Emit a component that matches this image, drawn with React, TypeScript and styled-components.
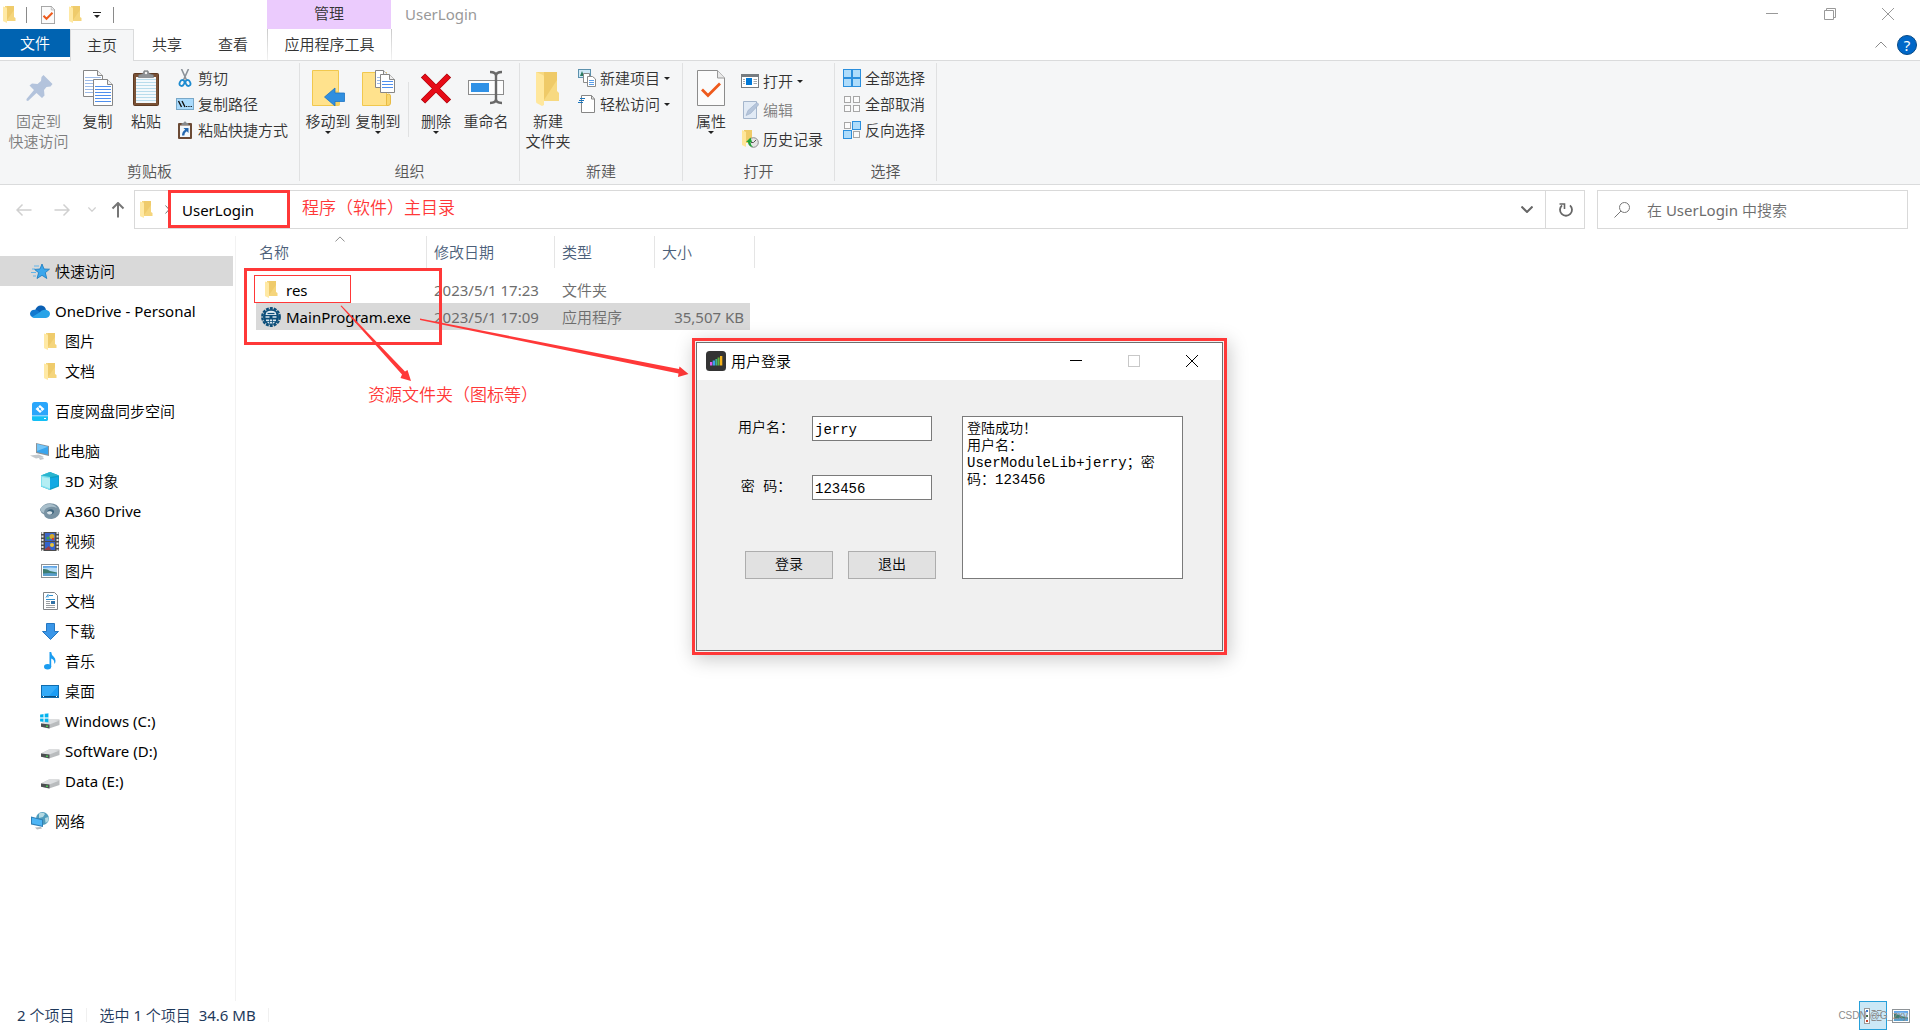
import React from "react";
import styled, { createGlobalStyle } from "styled-components";

const UI_FONT = '"Noto Sans", "Noto Sans CJK SC DemiLight", "Noto Sans CJK SC", sans-serif';
const FORM_FONT = '"Liberation Mono", "Noto Sans CJK SC DemiLight", "Noto Sans CJK SC", monospace';
const RED = "#ff3838";

const GlobalStyle = createGlobalStyle`
  *, *::before, *::after { box-sizing: border-box; }
  body { margin: 0; background: #fff; }
  button, input, textarea { font: inherit; color: inherit; margin: 0; border-radius: 0; }
  button { padding: 0; border: 0; background: none; }
  svg { display: block; flex: none; }
`;

/* ---------- shell ---------- */
const Explorer = styled.div`
  position: relative;
  display: flex;
  flex-direction: column;
  min-height: 100vh;
  overflow: hidden;
  background: #fff;
  font-family: ${UI_FONT};
  font-size: 15px;
  line-height: 20px;
  color: #000;
`;
const TitleBar = styled.header`
  display: flex;
  height: 29px;
`;
const QuickAccess = styled.div`
  display: flex;
  align-items: center;
  gap: 11px;
  width: 267px;
  padding-left: 3px;
`;
const QuickButton = styled.button<{ $w: number }>`
  display: flex;
  align-items: center;
  justify-content: center;
  width: ${(p) => p.$w}px;
  height: 29px;
  color: #8a8a8a;
`;
const QuickRule = styled.span`
  width: 1px;
  height: 16px;
  background: #8a8a8a;
`;
const ContextTitle = styled.div`
  width: 124px;
  background: #ebcbfd;
  color: #333;
  text-align: center;
  line-height: 26px;
`;
const WindowTitle = styled.h1`
  flex: 1;
  margin: 0;
  padding-left: 14px;
  font-size: 15px;
  font-weight: 400;
  line-height: 28px;
  color: #999;
`;
const WindowControls = styled.div<{ $color: string; $end: number }>`
  display: flex;
  padding: 0 ${(p) => p.$end}px 1px 0;
  color: ${(p) => p.$color};
`;
const WindowButton = styled.button`
  display: flex;
  align-items: center;
  justify-content: center;
  width: 58px;
`;

/* ---------- tabs ---------- */
const TabRow = styled.nav`
  display: flex;
  height: 31px;
  color: #333;
`;
const FileTab = styled.button`
  width: 70px;
  height: 28px;
  background: #0063b1;
  color: #fff;
`;
const Tab = styled.button<{ $active?: boolean }>`
  position: relative;
  height: ${(p) => (p.$active ? 32 : 31)}px;
  padding: 0 ${(p) => (p.$active ? 16 : 18)}px 2px;
  border: solid #dadbdc;
  border-width: ${(p) => (p.$active ? "1px 1px 0" : "0")};
  background: ${(p) => (p.$active ? "#f5f6f7" : "transparent")};
`;
const ContextTab = styled.button`
  width: 125px;
  margin-left: 1px;
  padding-bottom: 2px;
  border: solid;
  border-width: 0 1px;
  border-image: linear-gradient(#c8c8c8, #f4f4f4) 1;
`;
const TabTools = styled.div`
  display: flex;
  flex: 1;
  align-items: center;
  justify-content: flex-end;
  gap: 9px;
  padding-right: 3px;
`;
const HelpButton = styled.button`
  width: 20px;
  height: 20px;
  border: 1px solid #084a86;
  border-radius: 50%;
  background: #0067c8;
  color: #fff;
  line-height: 18px;
`;

/* ---------- ribbon ---------- */
const Ribbon = styled.section`
  display: flex;
  padding: 2px 0 3px;
  border: solid #dadbdc;
  border-width: 1px 0;
  background: #f5f6f7;
  color: #333;
`;
const Group = styled.div`
  display: flex;
  flex-direction: column;
  border-right: 1px solid #e0e1e2;
`;
const GroupBody = styled.div<{ $end?: number }>`
  display: flex;
  align-items: flex-start;
  height: 98px;
  padding: 2px ${(p) => p.$end ?? 11}px 0 3px;
`;
const GroupLabel = styled.div`
  text-align: center;
  color: #555;
`;
const BigButton = styled.button<{ $w?: number }>`
  display: flex;
  flex-direction: column;
  align-items: center;
  width: ${(p) => p.$w ?? 50}px;
  padding-top: 5px;
  white-space: pre;
  &:disabled { color: #7d7d7d; }
  > svg:first-child { margin-bottom: 5px; }
`;
const ButtonRule = styled.span`
  width: 1px;
  height: 55px;
  margin: 17px 2px 0 5px;
  background: #e0e1e2;
`;
const SmallColumn = styled.div<{ $loose?: boolean }>`
  display: flex;
  flex-direction: column;
  gap: ${(p) => (p.$loose ? 3 : 0)}px;
  padding: ${(p) => (p.$loose ? 3 : 0)}px 0 0 5px;
`;
const SmallButton = styled.button`
  display: flex;
  align-items: center;
  gap: 4px;
  height: 26px;
  white-space: nowrap;
  &:disabled { color: #7d7d7d; }
`;

/* ---------- address row ---------- */
const AddressRow = styled.div`
  display: flex;
  padding: 5px 12px 7px 5px;
`;
const NavButton = styled.button<{ $w: number }>`
  display: flex;
  align-items: center;
  justify-content: center;
  width: ${(p) => p.$w}px;
  color: #d0d0d0;
  &:enabled { color: #767676; }
`;
const AddressBar = styled.div`
  display: flex;
  flex: 1;
  align-items: center;
  height: 39px;
  margin: 0 12px 0 1px;
  padding-left: 5px;
  border: 1px solid #d9d9d9;
`;
const Crumb = styled.button`
  flex: 1;
  text-align: left;
`;
const BarButton = styled.button<{ $ruled?: boolean }>`
  display: flex;
  align-items: center;
  justify-content: center;
  width: 39px;
  height: 37px;
  padding-left: 2px;
  border-left: ${(p) => (p.$ruled ? "1px solid #d9d9d9" : "0")};
  color: #666;
`;
const SearchBox = styled.label`
  display: flex;
  align-items: center;
  gap: 17px;
  width: 311px;
  padding: 0 16px;
  border: 1px solid #d9d9d9;
  color: #777;
`;
const SearchInput = styled.input`
  flex: 1;
  min-width: 0;
  padding: 0;
  border: 0;
  outline: 0;
  background: none;
  &::placeholder { color: #6d6d6d; opacity: 1; }
`;

/* ---------- main area ---------- */
const Main = styled.div`
  display: flex;
  flex: 1;
`;
const Sidebar = styled.nav`
  width: 236px;
  padding: 20px 2px 0 0;
  border-right: 1px solid #f2f2f2;
`;
const TreeList = styled.ul`
  margin: 0 0 10px;
  padding: 0;
  list-style: none;
`;
const TreeItem = styled.a<{ $level: number; $selected?: boolean }>`
  display: flex;
  align-items: center;
  gap: 5px;
  height: 30px;
  padding-left: ${(p) => 20 + p.$level * 10}px;
  background: ${(p) => (p.$selected ? "#d9d9d9" : "transparent")};
  color: #000;
  text-decoration: none;
  white-space: nowrap;
`;
const IconBox = styled.span`
  display: flex;
  justify-content: center;
  width: 20px;
`;
const FilePane = styled.main`
  flex: 1;
  padding-left: 20px;
`;
const FileTable = styled.table`
  width: 499px;
  table-layout: fixed;
  border-collapse: separate;
  border-spacing: 0;
`;
const HeadCell = styled.th<{ $w: number; $first?: boolean }>`
  position: relative;
  width: ${(p) => p.$w}px;
  height: 32px;
  padding: 0 0 0 ${(p) => (p.$first ? 3 : 7)}px;
  border-right: 1px solid #e5e5e5;
  color: #4c607a;
  font-weight: 400;
  text-align: left;
`;
const SortMark = styled.span`
  position: absolute;
  top: 0;
  left: 79px;
  color: #777;
`;
const Spacer = styled.tbody`
  td { height: 8px; padding: 0; }
`;
const FileRow = styled.tr<{ $selected?: boolean }>`
  td {
    height: 27px;
    padding: 0 0 0 7px;
    background: ${(p) => (p.$selected ? "#d9d9d9" : "transparent")};
    background-clip: padding-box;
    color: #6d6d6d;
    white-space: nowrap;
  }
  td:first-child { padding-left: 5px; color: #000; }
  td:last-child { padding: 0 6px 0 0; border-right: 5px solid transparent; text-align: right; }
`;
const FileName = styled.span`
  display: flex;
  align-items: center;
  gap: 5px;
`;

/* ---------- status bar ---------- */
const StatusBar = styled.footer`
  display: flex;
  align-items: center;
  height: 29px;
  padding: 0 5px 0 17px;
  color: #1e395b;
`;
const StatusText = styled.span`
  margin: 0 12px 2px 0;
  padding-right: 12px;
  border-right: 1px solid #f0f0f0;
  line-height: 14px;
  white-space: pre;
`;
const ViewButton = styled.button<{ $on?: boolean; $push?: boolean }>`
  display: flex;
  align-items: center;
  justify-content: center;
  width: 28px;
  height: 29px;
  margin-left: ${(p) => (p.$push ? "auto" : "0")};
  border: ${(p) => (p.$on ? "1px solid #26a0da" : "0")};
  background: ${(p) => (p.$on ? "#cbe8f6" : "transparent")};
`;
const Watermark = styled.span`
  position: absolute;
  right: 12px;
  bottom: 4px;
  color: #8c8c8c;
  font: 10px/20px "Liberation Sans", sans-serif;
`;

/* ---------- login dialog ---------- */
const DialogFrame = styled.div`
  position: absolute;
  top: 338px;
  left: 692px;
  width: 535px;
  padding: 1px;
  border: 3px solid ${RED};
  background: #f2f2f2;
  box-shadow: 2px 4px 18px rgba(0, 0, 0, 0.22);
`;
const Dialog = styled.section`
  border: 1px solid #6e6e6e;
  background: #f0f0f0;
`;
const DialogTitle = styled.header`
  display: flex;
  height: 37px;
  padding-left: 9px;
  background: #fff;
`;
const DialogName = styled.h2`
  display: flex;
  flex: 1;
  align-items: center;
  gap: 5px;
  margin: 0;
  padding-bottom: 2px;
  font-size: 15px;
  font-weight: 400;
`;
const LoginForm = styled.form`
  display: flex;
  gap: 26px;
  padding: 36px 39px 71px 41px;
  font-family: ${FORM_FONT};
  font-size: 14px;
`;
const Fields = styled.div`
  width: 198px;
`;
const Field = styled.label`
  display: flex;
  gap: 18px;
  height: 25px;
  margin-bottom: 34px;
  line-height: 24px;
  white-space: pre;
`;
const FieldName = styled.span`
  width: 56px;
  text-align: center;
`;
const FieldInput = styled.input`
  width: 120px;
  padding: 2px 2px 0;
  border: 1px solid #7a7a7a;
  background: #fff;
  outline: 0;
`;
const FormButtons = styled.div`
  display: flex;
  gap: 15px;
  padding: 17px 0 0 7px;
`;
const FormButton = styled.button`
  width: 88px;
  height: 28px;
  border: 1px solid #adadad;
  background: #e1e1e1;
`;
const Output = styled.textarea`
  flex: 1;
  min-width: 0;
  padding: 4px 16px 4px 4px;
  border: 1px solid #7a7a7a;
  background: #fff;
  line-height: 17px;
  resize: none;
  overflow: hidden;
  outline: 0;
`;

/* ---------- annotations drawn over the window ---------- */
const MarkBox = styled.div<{ $x: number; $y: number; $w: number; $h: number; $line: number }>`
  position: absolute;
  left: ${(p) => p.$x}px;
  top: ${(p) => p.$y}px;
  width: ${(p) => p.$w}px;
  height: ${(p) => p.$h}px;
  border: ${(p) => p.$line}px solid ${RED};
  pointer-events: none;
`;
const MarkText = styled.p<{ $x: number; $y: number }>`
  position: absolute;
  left: ${(p) => p.$x}px;
  top: ${(p) => p.$y}px;
  margin: 0;
  color: ${RED};
  font-size: 17px;
  line-height: 24px;
  white-space: nowrap;
`;
const MarkArrows = styled.svg`
  position: absolute;
  top: 0;
  left: 0;
  pointer-events: none;
`;

/* ---------- icons ---------- */
const Folder = () => (
  <svg width="13" height="17" viewBox="0 0 13 17">
    <path d="M2 0H11V11L12.500 12V15H2Z" fill="#f5d57c" />
    <path d="M4 0H11V4L4 14Z" fill="#efcb6b" />
    <path d="M0 0.400L3.200 1.600Q4 2 4 3V17L.8 15.600Q0 15.200 0 14.400Z" fill="#ffe9a4" />
  </svg>
);
const PageCheck = ({ w, h }: { w: number; h: number }) => (
  <svg width={w} height={h} viewBox="0 0 28 36">
    <path d="M.5.5H20.500L27.500 8V35.500H.5Z" fill="#fbfbfb" stroke="#8c8c8c" strokeWidth={w < 20 ? 2 : 1} />
    <path d="M20.500.5V8H27.500" fill="#e9e9e9" stroke="#9a9a9a" />
    <path d="M5 19.500L11 25.500L23 13.500" fill="none" stroke="#ee5a1c" strokeWidth={w < 20 ? 4 : 2.8} />
  </svg>
);
const Caret = () => (
  <svg width="6" height="3" viewBox="0 0 6 3"><path d="M0 0H6L3 3Z" fill="#222" /></svg>
);
const CustomizeIcon = () => (
  <svg width="8" height="6" viewBox="0 0 8 6"><path d="M0 0H8V1H0ZM1 3H7L4 6Z" fill="#222" /></svg>
);
const MinIcon = () => (
  <svg width="12" height="12" viewBox="0 0 12 12"><path d="M0 5.500H12" stroke="currentColor" /></svg>
);
const MaxIcon = () => (
  <svg width="12" height="12" viewBox="0 0 12 12"><rect x=".5" y=".5" width="11" height="11" fill="none" stroke="#c8c8c8" /></svg>
);
const RestoreIcon = () => (
  <svg width="12" height="12" viewBox="0 0 12 12"><path d="M.5 2.500H9.500V11.500H.5ZM2.500 2.500V.5H11.500V9.500H9.500" fill="none" stroke="currentColor" /></svg>
);
const CloseIcon = () => (
  <svg width="12" height="12" viewBox="0 0 12 12"><path d="M0 0L12 12M12 0L0 12" stroke="currentColor" /></svg>
);
const Chevron = ({ up, w = 12, s = 1 }: { up?: boolean; w?: number; s?: number }) => (
  <svg width={w} height={w / 2 + 1} viewBox="0 0 12 7">
    <path d={up ? "M.5 6.500L6 1L11.500 6.500" : "M.5.5L6 6L11.500.5"} fill="none" stroke="currentColor" strokeWidth={s} />
  </svg>
);

const PinIcon = () => (
  <svg width="36" height="36" viewBox="0 0 36 36">
    <path d="M22.500 5L31.500 14L29.500 16.500L25.500 17L23 20L23.500 25.500L21 28L15.500 23L7 31L5.500 30.500L5.500 29L13 20L8.500 15.500L11 13.500L16.500 14L20 11L20.500 7Z" fill="#b3c3dc" />
  </svg>
);
const Sheet = ({ x, y, w, h, c }: { x: number; y: number; w: number; h: number; c: string }) => (
  <g transform={`translate(${x} ${y})`}>
    <path d={`M.5.5H${w - 5.5}L${w - 0.5} 5.500V${h - 0.5}H.5Z`} fill="#fff" stroke="#868686" />
    <path d={`M${w - 5.5}.5V5.500H${w - 0.5}`} fill="#eee" stroke="#868686" />
    {Array.from({ length: Math.floor((h - 8) / 3) }, (_, i) => (
      <path key={i} d={`M2 ${7.5 + i * 3}H${w - 2}`} stroke={c} />
    ))}
  </g>
);
const CopyIcon = () => (
  <svg width="30" height="36" viewBox="0 0 30 36">
    <Sheet x={0} y={0} w={20} h={27} c="#9dbbe8" />
    <Sheet x={10} y={9} w={20} h={27} c="#4f8fee" />
  </svg>
);
const Clipboard = () => (
  <svg width="26" height="36" viewBox="0 0 26 36">
    <rect x=".5" y="3.500" width="25" height="32" rx="1" fill="#7a5236" stroke="#5d3a22" />
    <rect x="3" y="7" width="20" height="26" fill="#f4f9fc" />
    {[9, 12, 15, 18, 21, 24, 27, 30].map((y) => <path key={y} d={`M3 ${y}.5H23`} stroke="#b9dcec" />)}
    <path d="M5.500 7.500V5L10 3.500L11 .8H15L16 3.500L20.500 5V7.500Z" fill="#8f9396" stroke="#6d7174" strokeWidth=".6" />
    <circle cx="13" cy="3" r="1.200" fill="#f3f3f3" />
  </svg>
);
const Scissors = () => (
  <svg width="18" height="18" viewBox="0 0 18 18">
    <path d="M5.500 0L10.500 11M12.500 0L7.500 11" stroke="#8b9299" strokeWidth="1.600" />
    <ellipse cx="6" cy="14" rx="2.300" ry="3" fill="none" stroke="#1d8bd0" strokeWidth="1.800" transform="rotate(25 6 14)" />
    <ellipse cx="12" cy="14" rx="2.300" ry="3" fill="none" stroke="#1d8bd0" strokeWidth="1.800" transform="rotate(-25 12 14)" />
  </svg>
);
const PathIcon = () => (
  <svg width="18" height="18" viewBox="0 0 18 18">
    <rect x=".5" y="3.500" width="17" height="11" fill="#a9dafc" stroke="#79a8c8" />
    <path d="M2.500 6L5.500 12M6 6L9 12" stroke="#111" strokeWidth="1.400" />
    <path d="M10 11.500H11.300M12.300 11.500H13.600M14.600 11.500H15.900" stroke="#111" strokeWidth="1.200" />
  </svg>
);
const ShortcutIcon = () => (
  <svg width="18" height="18" viewBox="0 0 18 18">
    <rect x="2" y="2" width="14" height="16" rx="1" fill="#6b4a35" />
    <rect x="4" y="4.500" width="10" height="11.500" fill="#f2f7fb" />
    <path d="M5.500 4V2.500L8 1.500L9 0L10 1.500L12.500 2.500V4Z" fill="#85898c" />
    <path d="M7.500 7H12.500V12L10.800 10.300Q8.300 11.500 8.300 14.500H6Q6 10.500 9.200 8.700Z" fill="#2366ae" />
  </svg>
);
const MoveIcon = () => (
  <svg width="34" height="36" viewBox="0 0 34 36">
    <path d="M1.500.5H27.500V35.500H1.500Z" fill="#ffe28d" stroke="#f1c84e" />
    <path d="M24 21Q29 20 29 25V35.500H24Z" fill="#f5d165" />
    <path d="M13.500 27L24 18V23H33.500V31.500H24V36Z" fill="#2f8fe0" stroke="#1d74c4" strokeWidth=".8" />
  </svg>
);
const CopyToIcon = () => (
  <svg width="34" height="36" viewBox="0 0 34 36">
    <path d="M1.500 2.500H25.500V35.500H1.500Z" fill="#ffe28d" stroke="#f1c84e" />
    <path d="M25.500 35.500V26Q25.500 24 27.500 24T29.500 26V33Q29.500 35.500 27 35.500Z" fill="#f9d76f" stroke="#e8bb45" />
    <Sheet x={14} y={0} w={14} h={18} c="#9dbbe8" />
    <Sheet x={19} y={4} w={15} h={19} c="#4f8fee" />
  </svg>
);
const DeleteIcon = () => (
  <svg width="32" height="36" viewBox="0 0 32 36">
    <path d="M3 5.500L29 31.500M29 5.500L3 31.500" stroke="#a30008" strokeWidth="6" />
    <path d="M3.500 6L28.500 31M28.500 6L3.500 31" stroke="#e60b17" strokeWidth="4.600" />
  </svg>
);
const RenameIcon = () => (
  <svg width="36" height="36" viewBox="0 0 36 36">
    <rect x=".5" y="10.500" width="35" height="14" fill="#fdfdfd" stroke="#8c8c8c" />
    <rect x="3" y="13" width="18" height="9" fill="#2f91e6" />
    <path d="M22 2Q28 2 28 6V29Q28 33 22 33M34 2Q28 2 28 6M28 29Q28 33 34 33" fill="none" stroke="#686868" strokeWidth="2.400" />
  </svg>
);
const BigFolder = () => (
  <svg width="26" height="36" viewBox="0 0 26 36">
    <path d="M1 2H22V21L24 23V31H6Z" fill="#f7d981" />
    <path d="M9 2H22V10L9 30Z" fill="#efca68" />
    <path d="M1 2L8 5Q9 5.500 9 6.500V35L7 36L1.500 33Q1 32.500 1 31Z" fill="#ffe79c" />
  </svg>
);
const NewItemIcon = () => (
  <svg width="18" height="18" viewBox="0 0 18 18">
    <rect x=".5" y=".5" width="12" height="8" fill="#cfe9f7" stroke="#5c91ad" />
    <path d="M2 7L4 2L6 7Z" fill="#2b7a60" />
    <path d="M5.500 4.500H11.500V13.500H5.500Z" fill="#fff" stroke="#8b8b8b" />
    <path d="M9.500 7.500H14.500L17.500 10V17.500H9.500Z" fill="#fff" stroke="#8b8b8b" />
    <path d="M11 11.500H16M11 13.500H16M11 15.500H16" stroke="#5a9de8" />
  </svg>
);
const EasyIcon = () => (
  <svg width="18" height="18" viewBox="0 0 18 18">
    <path d="M3.500.5H13.500L16.500 4V17.500H3.500Z" fill="#fff" stroke="#868686" />
    <path d="M13.500.5V4H16.500" fill="none" stroke="#868686" />
    <path d="M2 3.500H7M1 5.500H6M0 7.500H5" stroke="#1c75bc" strokeWidth="1.200" />
  </svg>
);
const OpenIcon = () => (
  <svg width="18" height="18" viewBox="0 0 18 18">
    <rect x=".5" y="2.500" width="17" height="13" fill="#fff" stroke="#777c80" />
    <path d="M1 3H17V5H1Z" fill="#777c80" />
    <rect x="5" y="6" width="6" height="7" fill="#0078d7" />
    <path d="M2 7.500H4M2 9.500H4M2 11.500H4M12.500 7.500H16M12.500 9.500H16M12.500 11.500H16" stroke="#a4a9ad" />
  </svg>
);
const EditIcon = () => (
  <svg width="18" height="18" viewBox="0 0 18 18">
    <path d="M2.500.5H15.500V17.500H2.500Z" fill="#e1eaf5" stroke="#a5b6cc" />
    <path d="M5 14.500L7 9.500L16 1.500L18 3.500L9.500 12.500Z" fill="#b5c5db" stroke="#9badc6" strokeWidth=".6" />
  </svg>
);
const HistoryIcon = () => (
  <svg width="18" height="18" viewBox="0 0 18 18">
    <path d="M3 0H11V13H3Z" fill="#efcb68" />
    <path d="M1 0L5 2V17L1 15Z" fill="#ffe699" />
    <circle cx="12.500" cy="12.500" r="4.800" fill="#e4e4e4" stroke="#8c8c8c" />
    <path d="M12.500 12.500L15 10M12.500 12.500H10" stroke="#555" />
    <path d="M9.500 7.500L5 12H7Q7.500 16.500 12 17Q9.500 15 9.500 12H11Z" fill="#21a336" />
  </svg>
);
const Tiles = ({ on }: { on: boolean[] }) => (
  <svg width="18" height="18" viewBox="0 0 18 18">
    {[[0, 0], [9, 0], [0, 9], [9, 9]].map(([x, y], i) =>
      on[i] ? (
        <rect key={i} x={x + 0.5} y={y + 0.5} width="8" height="8" fill="#aedcfb" stroke="#2b8fdd" />
      ) : (
        <rect key={i} x={x + 1.5} y={y + 1.5} width="6" height="6" fill="#fbfbfb" stroke="#a6a6a6" />
      ),
    )}
  </svg>
);

const ArrowIcon = ({ turn = 0, s = 1.5 }: { turn?: number; s?: number }) => (
  <svg width="16" height="16" viewBox="0 0 16 16">
    <path d="M1 8H15.500M6.500 2.500L1 8L6.500 13.500" fill="none" stroke="currentColor" strokeWidth={s} transform={`rotate(${turn} 8 8)`} />
  </svg>
);
const RefreshIcon = () => (
  <svg width="16" height="16" viewBox="0 0 16 16">
    <path d="M12 3.300A6 6 0 1 1 4 3.300" fill="none" stroke="currentColor" strokeWidth="1.800" />
    <path d="M1.500 2H6.500V7" fill="none" stroke="currentColor" strokeWidth="1.600" />
  </svg>
);
const SearchIcon = () => (
  <svg width="16" height="16" viewBox="0 0 16 16">
    <circle cx="10.500" cy="5.500" r="5" fill="none" stroke="currentColor" />
    <path d="M7 9L.5 15.500" stroke="currentColor" />
  </svg>
);

const StarIcon = () => (
  <svg width="19" height="17" viewBox="0 0 19 17">
    <path d="M11 1L13 6L18.500 6.200L14.300 9.700L15.800 15.500L11 12.300L6 15.500L7.600 9.700L3.500 6.400L9 6Z" fill="#3ba7ec" stroke="#1778be" strokeWidth=".8" />
    <path d="M3 3H8M1 6H4M0 9.500H5M2 13H5" stroke="#62b5ea" />
  </svg>
);
const CloudIcon = () => (
  <svg width="20" height="13" viewBox="0 0 20 13">
    <path d="M5 5.500Q7 0 11.500 .6Q15 1.200 16 4.700L10 9L3 9Z" fill="#0a5fb4" />
    <path d="M4 12.500Q0 12 0 8.500Q.5 5 4.500 4.800Q7 4.500 9.500 7L13 11L11 13Z" fill="#1179cf" />
    <path d="M9.500 7.500Q12 4 16 4.800Q20 5.800 20 9Q19.500 12.500 16 13H4Q2.500 12.500 2 12Z" fill="#28a3e8" />
  </svg>
);
const BaiduIcon = () => (
  <svg width="16" height="19" viewBox="0 0 16 19">
    <rect width="16" height="19" rx="2.500" fill="#2aa6fb" />
    <path d="M0 14H16V16.500Q16 19 13.500 19H2.500Q0 19 0 16.500Z" fill="#13c0f5" />
    <path d="M0 13.800H16" stroke="#d5f1ff" strokeWidth=".8" />
    <path d="M8 3L12.500 7L8 11L3.500 7ZM8 5.800L6.700 7L8 8.200L9.300 7Z" fill="#fff" fillRule="evenodd" />
    <path d="M5.500 4L10 9.500" stroke="#2aa6fb" strokeWidth=".8" />
    <path d="M12 16.500H14" stroke="#fff" />
  </svg>
);
const PcIcon = () => (
  <svg width="20" height="17" viewBox="0 0 20 17">
    <path d="M6 0L19 3V13L6 10Z" fill="#8a9298" />
    <path d="M7 1L18 3.700V11.500L7 9Z" fill="#39a5ee" />
    <path d="M7 1L18 3.700L7 8Z" fill="#74c5f7" />
    <path d="M0 12.500L9 11.500L14 14L6 15.500ZM9 15L13 14.500L14 16L10 17Z" fill="#c3c8cc" />
  </svg>
);
const CubeIcon = () => (
  <svg width="18" height="18" viewBox="0 0 18 18">
    <path d="M9 0L18 3.500V14.500L9 18L0 14.500V3.500Z" fill="#0f9fc6" />
    <path d="M9 4.500V18L0 14.500V3.500L9 0Z" fill="#7fe0ee" />
    <path d="M0 3.500L9 0L18 3.500L9 5Z" fill="#2ab5cf" />
    <path d="M1 5L9 6.500V16.500L1 13.500Z" fill="#c9f4f7" opacity=".7" />
    <path d="M9 6.500L17 5V13.500L9 16.500Z" fill="#13a9e4" />
  </svg>
);
const DriveCloudIcon = () => (
  <svg width="20" height="16" viewBox="0 0 20 16">
    <path d="M1 5Q4 .3 10 .3Q19 .5 20 8Q19.500 14.500 12 16Q5 16.200 4 11.500Q1 10.500 0 7Q0 5.500 1 5Z" fill="#7892a3" />
    <path d="M1 5Q4 1 10 1Q15 1.500 17 5Q12 3 8 4.500Q4 6 4 10Q1 9 .5 7Q.5 5.500 1 5Z" fill="#a9bfcb" />
    <path d="M7 9Q8 6 11.500 6.300Q14.500 7 14 9.500Q13 12 10 11.500Q13 10.500 12 9Q10 7.500 7 9Z" fill="#3f667e" />
    <path d="M7 9Q10 7.500 12 9Q13 10.500 10 11.500Q7 11.500 7 9Z" fill="#dbe5ea" />
  </svg>
);
const FilmIcon = () => (
  <svg width="18" height="19" viewBox="0 0 18 19">
    <rect width="18" height="19" fill="#4b4b4b" />
    <path d="M1.500 0V19M16.500 0V19" stroke="#e8e8e8" strokeWidth="2" strokeDasharray="2 1.500" />
    <rect x="4" y="1" width="10" height="8" fill="#3c66c8" />
    <rect x="4" y="10" width="10" height="8" fill="#3463cc" />
    <circle cx="11" cy="4.500" r="2.500" fill="#d3a92c" /><circle cx="7" cy="6" r="1.600" fill="#3aa34b" />
    <circle cx="11" cy="13" r="2" fill="#e8c53b" /><circle cx="12" cy="7" r="1.200" fill="#cc3e2f" />
    <path d="M4 17L8 14L10 18H4Z" fill="#9a3d45" />
  </svg>
);
const PictureIcon = () => (
  <svg width="18" height="14" viewBox="0 0 18 14">
    <rect x=".5" y=".5" width="17" height="13" fill="#fff" stroke="#8e9397" />
    <rect x="2" y="2" width="14" height="10" fill="#b5dcf7" />
    <path d="M2 5Q6 4.500 9 7L16 8.500V10H2Z" fill="#3d7d71" />
    <path d="M2 9.500Q8 8.500 16 9.500V12H2Z" fill="#5b9fcc" />
    <path d="M2 2H16V4Q10 3 2 4Z" fill="#3f8fe0" opacity=".7" />
  </svg>
);
const DocIcon = () => (
  <svg width="15" height="18" viewBox="0 0 15 18">
    <path d="M.5.5H11.500L14.500 3.500V17.500H.5Z" fill="#fff" stroke="#808488" />
    <path d="M3 5.500L5 2.500V5.500M6 3.500H10M3 7.500H12" stroke="#2e8fd0" fill="none" />
    <path d="M3 9.500H7M3 11.500H7M3 13.500H12M3 15.500H12" stroke="#9a9ea2" />
    <rect x="8" y="9" width="4" height="3" fill="#3272a6" />
  </svg>
);
const DownIcon = () => (
  <svg width="17" height="17" viewBox="0 0 17 17"><path d="M4.500.5H12.500V8.500H16.500L8.500 16.500L.5 8.500H4.500Z" fill="#3a96e8" stroke="#2477c2" /></svg>
);
const MusicIcon = () => (
  <svg width="12" height="18" viewBox="0 0 12 18">
    <ellipse cx="3.600" cy="14.700" rx="3.600" ry="2.700" fill="#1a9cf0" />
    <path d="M5.500 0H7.200Q7.500 3 9.500 4.500Q12.500 7 11 11.500H10.300Q10.500 7.500 7.200 6.500V15H5.500Z" fill="#1a9cf0" />
  </svg>
);
const DesktopIcon = () => (
  <svg width="18" height="13" viewBox="0 0 18 13">
    <rect x=".5" y=".5" width="17" height="12" fill="#1b9df5" stroke="#0f6cae" />
    <path d="M1 1H17L8 11H1Z" fill="#35abf8" />
    <path d="M1 11.500H17" stroke="#0b4f80" />
    <path d="M2 11.500H3M15 11.500H16" stroke="#fff" />
  </svg>
);
const DiskIcon = ({ win }: { win?: boolean }) => (
  <svg width="20" height="16" viewBox="0 0 20 16">
    <path d="M1 10.500L9 6.500H19.500V12L9 15.500L1 13.500Z" fill="#b9bcbe" />
    <path d="M1 10.500L9 6.500L19.500 7.500L9.500 11.500Z" fill="#dcdee0" />
    <path d="M1 10.500L9.500 11.500V15.500L1 13.800Z" fill="#4c4f51" />
    <rect x="6" y="12.500" width="2" height="1.500" fill="#4dc255" />
    {win && <path d="M0 1.500L3.600 1V4.500H0ZM4.600 .8L8.500 .2V4.500H4.600ZM0 5.500H3.600V9L0 8.500ZM4.600 5.500H8.500V9.500L4.600 9Z" fill="#00b2ee" stroke="#fff" strokeWidth=".2" />}
  </svg>
);
const NetworkIcon = () => (
  <svg width="18" height="18" viewBox="0 0 18 18">
    <circle cx="11.500" cy="6.500" r="6.500" fill="#4f9cbc" />
    <path d="M8 1.500Q12 0 14 2L12 5L8 6ZM14 6L17.500 5V9L14.500 11Z" fill="#b4d9e2" />
    <path d="M0 4.500L12 7.500V15L0 12.500Z" fill="#2f7fb5" />
    <path d="M1 5.800L11 8.300V13.700L1 11.600Z" fill="#4db5f5" />
    <path d="M4 15.500L10 15L11 16.500L6 17.500Z" fill="#b5babd" />
  </svg>
);
const ExeIcon = () => (
  <svg width="20" height="20" viewBox="0 0 20 20">
    <circle cx="10" cy="10" r="8" fill="#0d4f7a" />
    <circle cx="10" cy="10" r="8.800" fill="none" stroke="#0d4f7a" strokeWidth="2.200" strokeDasharray="3 1" />
    <path d="M5.500 5Q10 2.500 14.500 5L15.500 8H4.500Z" fill="#e3edf3" />
    <path d="M6.500 6.500H13.500" stroke="#0d4f7a" strokeWidth="1.200" />
    <path d="M4.500 10H8.500M11.500 10H15.500" stroke="#d9e6ee" strokeWidth="1.300" />
    <path d="M5 12.500H15V14L12.500 16.500H7.500L5 14Z" fill="#d9e6ee" />
    <path d="M8.500 12V16.500M11.500 12V16.500M5 14.500H15" stroke="#0d4f7a" strokeWidth=".8" />
  </svg>
);
const ChartIcon = () => (
  <svg width="20" height="20" viewBox="0 0 20 20">
    <rect width="20" height="20" rx="3.500" fill="#343434" />
    <rect x="4" y="11" width="2.300" height="3.500" fill="#e05bea" />
    <rect x="6.700" y="9.500" width="2.300" height="5" fill="#3c9ff0" />
    <rect x="9.400" y="8" width="2" height="6.500" fill="#3db58c" />
    <rect x="11.600" y="6.500" width="2" height="8" fill="#63b23a" />
    <rect x="14" y="5" width="2.300" height="9.500" fill="#f5b21a" />
  </svg>
);
const DetailsIcon = () => (
  <svg width="18" height="16" viewBox="0 0 18 16">
    <rect x=".5" y=".5" width="5" height="15" fill="#fff" stroke="#9a9a9a" />
    <rect x="2" y="2" width="2" height="2" fill="#3274c4" />
    <rect x="2" y="7" width="2" height="2" fill="#3b6b4a" />
    <rect x="2" y="12" width="2" height="2" fill="#c4432b" />
    <path d="M7.500 2.500H11.500M13 2.500H17.500M7.500 7.500H11.500M13 7.500H17.500M7.500 12.500H11.500M13 12.500H17.500" stroke="#8d8d8d" />
  </svg>
);

/* ---------- data ---------- */
type Node = { label: string; icon: React.ReactNode; level: number; selected?: boolean };
const TREE: Node[][] = [
  [{ label: "快速访问", icon: <StarIcon />, level: 1, selected: true }],
  [
    { label: "OneDrive - Personal", icon: <CloudIcon />, level: 1 },
    { label: "图片", icon: <Folder />, level: 2 },
    { label: "文档", icon: <Folder />, level: 2 },
  ],
  [{ label: "百度网盘同步空间", icon: <BaiduIcon />, level: 1 }],
  [
    { label: "此电脑", icon: <PcIcon />, level: 1 },
    { label: "3D 对象", icon: <CubeIcon />, level: 2 },
    { label: "A360 Drive", icon: <DriveCloudIcon />, level: 2 },
    { label: "视频", icon: <FilmIcon />, level: 2 },
    { label: "图片", icon: <PictureIcon />, level: 2 },
    { label: "文档", icon: <DocIcon />, level: 2 },
    { label: "下载", icon: <DownIcon />, level: 2 },
    { label: "音乐", icon: <MusicIcon />, level: 2 },
    { label: "桌面", icon: <DesktopIcon />, level: 2 },
    { label: "Windows (C:)", icon: <DiskIcon win />, level: 2 },
    { label: "SoftWare (D:)", icon: <DiskIcon />, level: 2 },
    { label: "Data (E:)", icon: <DiskIcon />, level: 2 },
  ],
  [{ label: "网络", icon: <NetworkIcon />, level: 1 }],
];
const FILES = [
  { name: "res", icon: <Folder />, date: "2023/5/1 17:23", type: "文件夹", size: "" },
  { name: "MainProgram.exe", icon: <ExeIcon />, date: "2023/5/1 17:09", type: "应用程序", size: "35,507 KB", selected: true },
];

const RibbonBar = () => (
  <Ribbon>
    <Group>
      <GroupBody>
        <BigButton $w={71} disabled><PinIcon />{"固定到\n快速访问"}</BigButton>
        <BigButton $w={47}><CopyIcon />复制</BigButton>
        <BigButton $w={50}><Clipboard />粘贴</BigButton>
        <SmallColumn>
          <SmallButton><Scissors />剪切</SmallButton>
          <SmallButton><PathIcon />复制路径</SmallButton>
          <SmallButton><ShortcutIcon />粘贴快捷方式</SmallButton>
        </SmallColumn>
      </GroupBody>
      <GroupLabel>剪贴板</GroupLabel>
    </Group>
    <Group>
      <GroupBody $end={8}>
        <BigButton><MoveIcon />移动到<Caret /></BigButton>
        <BigButton><CopyToIcon />复制到<Caret /></BigButton>
        <ButtonRule />
        <BigButton><DeleteIcon />删除<Caret /></BigButton>
        <BigButton><RenameIcon />重命名</BigButton>
      </GroupBody>
      <GroupLabel>组织</GroupLabel>
    </Group>
    <Group>
      <GroupBody $end={12}>
        <BigButton><BigFolder />{"新建\n文件夹"}</BigButton>
        <SmallColumn>
          <SmallButton><NewItemIcon />新建项目<Caret /></SmallButton>
          <SmallButton><EasyIcon />轻松访问<Caret /></SmallButton>
        </SmallColumn>
      </GroupBody>
      <GroupLabel>新建</GroupLabel>
    </Group>
    <Group>
      <GroupBody>
        <BigButton><PageCheck w={28} h={36} />属性<Caret /></BigButton>
        <SmallColumn $loose>
          <SmallButton><OpenIcon />打开<Caret /></SmallButton>
          <SmallButton disabled><EditIcon />编辑</SmallButton>
          <SmallButton><HistoryIcon />历史记录</SmallButton>
        </SmallColumn>
      </GroupBody>
      <GroupLabel>打开</GroupLabel>
    </Group>
    <Group>
      <GroupBody>
        <SmallColumn>
          <SmallButton><Tiles on={[true, true, true, true]} />全部选择</SmallButton>
          <SmallButton><Tiles on={[false, false, false, false]} />全部取消</SmallButton>
          <SmallButton><Tiles on={[false, true, true, false]} />反向选择</SmallButton>
        </SmallColumn>
      </GroupBody>
      <GroupLabel>选择</GroupLabel>
    </Group>
  </Ribbon>
);

const LoginDialog = () => (
  <DialogFrame>
    <Dialog role="dialog" aria-labelledby="login-title">
      <DialogTitle>
        <DialogName id="login-title"><ChartIcon />用户登录</DialogName>
        <WindowControls $color="#000" $end={1}>
          <WindowButton aria-label="最小化"><MinIcon /></WindowButton>
          <WindowButton aria-label="最大化" disabled><MaxIcon /></WindowButton>
          <WindowButton aria-label="关闭"><CloseIcon /></WindowButton>
        </WindowControls>
      </DialogTitle>
      <LoginForm onSubmit={(e) => e.preventDefault()}>
        <Fields>
          <Field><FieldName>用户名：</FieldName><FieldInput defaultValue="jerry" /></Field>
          <Field><FieldName>密 码：</FieldName><FieldInput defaultValue="123456" /></Field>
          <FormButtons>
            <FormButton type="submit">登录</FormButton>
            <FormButton type="button">退出</FormButton>
          </FormButtons>
        </Fields>
        <Output aria-label="登录结果" readOnly value={"登陆成功！\n用户名：\nUserModuleLib+jerry；密码：123456"} />
      </LoginForm>
    </Dialog>
  </DialogFrame>
);

export default function App() {
  return (
    <>
      <GlobalStyle />
      <Explorer>
        <TitleBar>
          <QuickAccess>
            <QuickButton $w={12} aria-label="文件夹"><Folder /></QuickButton>
            <QuickRule />
            <QuickButton $w={20} aria-label="属性"><PageCheck w={14} h={18} /></QuickButton>
            <QuickButton $w={12} aria-label="新建文件夹"><Folder /></QuickButton>
            <QuickButton $w={10} aria-label="自定义快速访问工具栏"><CustomizeIcon /></QuickButton>
            <QuickRule />
          </QuickAccess>
          <ContextTitle>管理</ContextTitle>
          <WindowTitle>UserLogin</WindowTitle>
          <WindowControls $color="#999" $end={3}>
            <WindowButton aria-label="最小化"><MinIcon /></WindowButton>
            <WindowButton aria-label="还原"><RestoreIcon /></WindowButton>
            <WindowButton aria-label="关闭"><CloseIcon /></WindowButton>
          </WindowControls>
        </TitleBar>
        <TabRow>
          <FileTab>文件</FileTab>
          <Tab $active>主页</Tab>
          <Tab>共享</Tab>
          <Tab>查看</Tab>
          <ContextTab>应用程序工具</ContextTab>
          <TabTools>
            <QuickButton $w={14} aria-label="折叠功能区"><Chevron up /></QuickButton>
            <HelpButton aria-label="帮助">?</HelpButton>
          </TabTools>
        </TabRow>
        <RibbonBar />
        <AddressRow>
          <NavButton $w={38} disabled aria-label="后退"><ArrowIcon /></NavButton>
          <NavButton $w={38} disabled aria-label="前进"><ArrowIcon turn={180} /></NavButton>
          <NavButton $w={22} disabled aria-label="最近"><Chevron w={8} s={2} /></NavButton>
          <NavButton $w={30} aria-label="上移"><ArrowIcon turn={90} s={2} /></NavButton>
          <AddressBar>
            <Folder />
            <NavButton $w={29} aria-label="展开">
              <svg width="5" height="9" viewBox="0 0 5 9"><path d="M.5.5L4 4.500L.5 8.500" fill="none" stroke="currentColor" /></svg>
            </NavButton>
            <Crumb>UserLogin</Crumb>
            <BarButton aria-label="历史"><Chevron w={12} s={2} /></BarButton>
            <BarButton $ruled aria-label="刷新"><RefreshIcon /></BarButton>
          </AddressBar>
          <SearchBox>
            <SearchIcon />
            <SearchInput placeholder="在 UserLogin 中搜索" aria-label="搜索" />
          </SearchBox>
        </AddressRow>
        <Main>
          <Sidebar>
            {TREE.map((nodes, i) => (
              <TreeList key={i}>
                {nodes.map((n) => (
                  <li key={n.label}>
                    <TreeItem href="#" $level={n.level} $selected={n.selected}>
                      <IconBox>{n.icon}</IconBox>{n.label}
                    </TreeItem>
                  </li>
                ))}
              </TreeList>
            ))}
          </Sidebar>
          <FilePane>
            <FileTable>
              <thead>
                <tr>
                  <HeadCell $w={171} $first>名称<SortMark><Chevron up w={10} /></SortMark></HeadCell>
                  <HeadCell $w={128}>修改日期</HeadCell>
                  <HeadCell $w={100}>类型</HeadCell>
                  <HeadCell $w={100}>大小</HeadCell>
                </tr>
              </thead>
              <Spacer><tr><td colSpan={4} /></tr></Spacer>
              <tbody>
                {FILES.map((f) => (
                  <FileRow key={f.name} $selected={f.selected}>
                    <td><FileName><IconBox>{f.icon}</IconBox>{f.name}</FileName></td>
                    <td>{f.date}</td>
                    <td>{f.type}</td>
                    <td>{f.size}</td>
                  </FileRow>
                ))}
              </tbody>
            </FileTable>
          </FilePane>
        </Main>
        <StatusBar>
          <StatusText>2 个项目</StatusText>
          <StatusText>{"选中 1 个项目  34.6 MB"}</StatusText>
          <ViewButton $on $push aria-label="详细信息"><DetailsIcon /></ViewButton>
          <ViewButton aria-label="大图标"><PictureIcon /></ViewButton>
        </StatusBar>

        <MarkArrows width="700" height="400" viewBox="0 0 700 400" aria-hidden="true">
          <path d="M340.500 306L341.500 305.500L405 371.500L407.500 370L411 381L400.500 378L402 374.500Z" fill={RED} />
          <path d="M420 318.500L679 369L679.500 366.500L688.500 374L678 377L678.500 373.500L420 320Z" fill={RED} />
        </MarkArrows>
        <MarkBox $x={168} $y={190} $w={122} $h={38} $line={3} />
        <MarkBox $x={244} $y={268} $w={198} $h={77} $line={3} />
        <MarkBox $x={254} $y={275} $w={97} $h={28} $line={1} />
        <MarkText $x={302} $y={196}>程序（软件）主目录</MarkText>
        <MarkText $x={368} $y={383}>资源文件夹（图标等）</MarkText>
        <LoginDialog />
        <Watermark>CSDN @G_zxy</Watermark>
      </Explorer>
    </>
  );
}
